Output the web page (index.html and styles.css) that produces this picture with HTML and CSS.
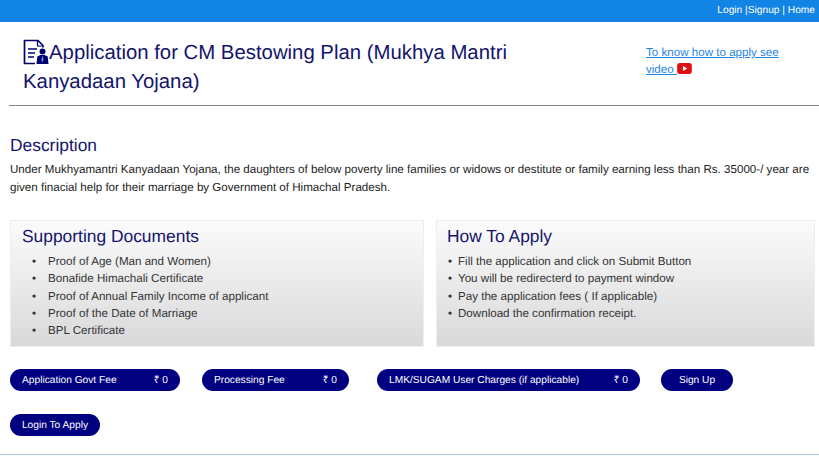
FILE: index.html
```html
<!DOCTYPE html>
<html lang="en">
<head>
<meta charset="utf-8">
<title>Application for CM Bestowing Plan</title>
<link rel="stylesheet" href="styles.css">
</head>
<body>
<div class="topbar"><a href="#">Login</a> |<a href="#">Signup</a> | <a href="#">Home</a></div>
<header class="head">
  <h1 class="title"><svg class="doc-icon" viewBox="0 0 26 26" aria-hidden="true"><path d="M12 24.5H1.5V1.5H15l5 5v2" fill="none" stroke="#000070" stroke-width="1.7"/><path d="M14.5 1.5v5.5h5.5" fill="none" stroke="#000070" stroke-width="1.2"/><path d="M5 10h9M5 14h7M5 18h6" stroke="#000070" stroke-width="1.5"/><circle cx="19.5" cy="12.5" r="3" fill="#000070"/><path d="M13.5 25l.8-7.5 3-1.5h4.4l3 1.5.8 7.5z" fill="#000070"/><path d="M19.5 16.5l-1.2 4 1.2 3 1.2-3z" fill="#5f8fc0"/></svg>Application for CM Bestowing Plan (Mukhya Mantri Kanyadaan Yojana)</h1>
  <a class="video" href="#">To know how to apply see video <svg class="yt" viewBox="0 0 16 12" aria-hidden="true"><rect width="16" height="12" rx="3" fill="#e01010"/><path d="M6.3 3.4v5.2L11 6z" fill="#fff"/></svg></a>
</header>
<main>
  <section class="desc">
    <h2>Description</h2>
    <p>Under Mukhyamantri Kanyadaan Yojana, the daughters of below poverty line families or widows or destitute or family earning less than Rs. 35000-/ year are given finacial help for their marriage by Government of Himachal Pradesh.</p>
  </section>
  <div class="cards">
    <section class="card card-docs">
      <h3>Supporting Documents</h3>
      <ul class="list-docs">
        <li>Proof of Age (Man and Women)</li>
        <li>Bonafide Himachali Certificate</li>
        <li>Proof of Annual Family Income of applicant</li>
        <li>Proof of the Date of Marriage</li>
        <li>BPL Certificate</li>
      </ul>
    </section>
    <section class="card card-steps">
      <h3>How To Apply</h3>
      <ul class="list-steps">
        <li>Fill the application and click on Submit Button</li>
        <li>You will be redirecterd to payment window</li>
        <li>Pay the application fees ( If applicable)</li>
        <li>Download the confirmation receipt.</li>
      </ul>
    </section>
  </div>
  <div class="actions">
    <div class="pill fee-a"><span>Application Govt Fee</span><span>₹ 0</span></div>
    <div class="pill fee-b"><span>Processing Fee</span><span>₹ 0</span></div>
    <div class="pill fee-c"><span>LMK/SUGAM User Charges (if applicable)</span><span>₹ 0</span></div>
    <a class="pill signup" href="#">Sign Up</a>
    <a class="pill login" href="#">Login To Apply</a>
  </div>
</main>
<div class="rule"></div>
</body>
</html>
```
FILE: styles.css
```css
* { box-sizing: border-box; }
html, body { margin: 0; padding: 0; }
body {
  width: 819px;
  height: 457px;
  overflow: hidden;
  background: #fff;
  font-family: "Liberation Sans", Arial, sans-serif;
  color: #222;
  text-rendering: geometricPrecision;
}
a { color: inherit; text-decoration: none; }
.topbar {
  height: 22px;
  background: #1284e6;
  color: #fff;
  font-size: 10.2px;
  line-height: 22px;
  text-align: right;
  padding-right: 4px;
}
.head {
  margin-left: 9px;
  height: 84px;
  border-bottom: 1px solid #85858d;
  padding: 17px 0 0 14px;
  display: flex;
}
.title {
  margin: 0;
  width: 505px;
  font-size: 20.35px;
  line-height: 29px;
  font-weight: 400;
  color: #14146c;
}
.doc-icon {
  width: 26px;
  height: 26px;
  vertical-align: -6px;
}
.video {
  margin: 5px 0 0 118px;
  width: 150px;
  font-size: 11.6px;
  line-height: 17px;
  color: #1f86e0;
  text-decoration: underline;
}
.yt { width: 15px; height: 11px; vertical-align: -1px; }
main { padding: 0 5px 0 10px; }
.desc { margin-top: 28px; }
.desc h2 {
  margin: 0;
  font-size: 17.4px;
  line-height: 22px;
  font-weight: 400;
  color: #14146c;
}
.desc p {
  margin: 5px 0 0;
  font-size: 11.6px;
  line-height: 17.5px;
  color: #222;
}
.cards {
  margin-top: 24px;
  display: grid;
  grid-template-columns: 414px 379px;
  column-gap: 12px;
}
.card {
  height: 127px;
  padding-top: 5px;
  background: linear-gradient(#fbfbfb, #d9d9db);
  border: 1px solid #eeeeee;
}
.card-docs { padding-left: 11px; }
.card-steps { padding-left: 10px; }
.card h3 {
  margin: 0;
  font-size: 17.4px;
  line-height: 20px;
  font-weight: 400;
  color: #14146c;
}
.card ul {
  margin: 7px 0 0;
  font-size: 11.6px;
  line-height: 17.3px;
  color: #333;
  list-style: none;
}
.card li::before {
  content: "•";
  display: inline-block;
}
.list-docs { padding-left: 10px; }
.list-docs li::before { width: 16px; }
.list-steps { padding-left: 1px; }
.list-steps li::before { width: 10px; }
.actions {
  margin-top: 22px;
  display: flex;
  flex-wrap: wrap;
  align-items: center;
  row-gap: 23px;
}
.pill {
  height: 22px;
  border-radius: 11px;
  background: #000080;
  color: #fff;
  font-size: 10.2px;
  line-height: 23px;
  padding: 0 12px;
  display: flex;
  justify-content: space-between;
  white-space: nowrap;
}
.fee-a { width: 170px; margin-right: 22px; }
.fee-b { width: 147px; margin-right: 28px; }
.fee-c { width: 263px; margin-right: 21px; }
.signup { width: 72px; justify-content: center; }
.login { width: 90px; justify-content: center; }
.rule {
  margin-top: 18px;
  height: 1px;
  background: #a8cdec;
}
```
